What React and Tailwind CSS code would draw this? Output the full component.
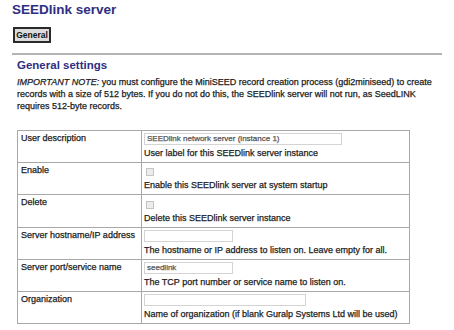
const ROWS = [
  { label: "User description", kind: "text", value: "SEEDlink network server (instance 1)", width: "w-[198px]", help: "User label for this SEEDlink server instance" },
  { label: "Enable", kind: "check", help: "Enable this SEEDlink server at system startup" },
  { label: "Delete", kind: "check", help: "Delete this SEEDlink server instance", extra: true },
  { label: "Server hostname/IP address", kind: "text", value: "", width: "w-[89px]", help: "The hostname or IP address to listen on. Leave empty for all." },
  { label: "Server port/service name", kind: "text", value: "seedlink", width: "w-[89px]", help: "The TCP port number or service name to listen on.", extra: true },
  { label: "Organization", kind: "text", value: "", width: "w-[162px]", help: "Name of organization (if blank Guralp Systems Ltd will be used)" },
];

function Field({ row }) {
  if (row.kind === "check") {
    return (
      <div className={row.extra ? "h-[13px] pt-[4px] pl-[2px]" : "h-[12px] pt-[3px] pl-[2px]"}>
        <span className="block w-[8px] h-[8px] border border-[#c4c4c4] bg-[#ececec]" />
      </div>
    );
  }
  return (
    <div className={`${row.width} h-[12px] border border-[#d4d4d4] bg-white pl-[2px] text-[8px] leading-[10px] text-[#555] whitespace-nowrap overflow-hidden`}>
      {row.value}
    </div>
  );
}

export default function App() {
  return (
    <div className="w-[454px] h-[330px] bg-white overflow-hidden font-['Liberation_Sans',Arial,sans-serif] text-[#1c1c1c]">
      <h1 className="pl-[12px] pt-[2px] text-[13.5px] font-bold leading-[16px] text-[#2e2e82]">SEEDlink server</h1>

      <div className="pl-[13px] mt-[9px]">
        <div className="w-[38px] h-[16px] border-2 border-[#2a2a2a] bg-[#dcdcdc] flex items-center justify-center text-[8.5px] font-bold leading-none text-[#111]">
          General
        </div>
      </div>

      <div className="ml-[12px] mt-[10px] w-[430px] h-[2px] bg-[#b4b4b4]" />

      <div className="pl-[17px] [-webkit-text-stroke:0.25px_currentColor]">
        <h2 className="mt-[3px] text-[11.5px] font-bold leading-[14px] text-[#2e2e82] [-webkit-text-stroke:0px]">General settings</h2>

        <p className="mt-[4px] w-[420px] text-[9px] leading-[12px]">
          <i>IMPORTANT NOTE:</i> you must configure the MiniSEED record creation process (gdi2miniseed) to create
          records with a size of 512 bytes. If you do not do this, the SEEDlink server will not run, as SeedLINK
          requires 512-byte records.
        </p>

        <table className="mt-[18px] w-[393px] border-collapse border border-[#a8a8a8] text-[9px] leading-[12px]">
          <tbody>
            {ROWS.map((row) => (
              <tr key={row.label}>
                <td className="w-[124px] border border-[#a8a8a8] align-top pl-[3px] pt-[1px]">{row.label}</td>
                <td className="border border-[#a8a8a8] align-top pl-[2px] pt-[2px] pb-[3px]">
                  <Field row={row} />
                  <div className="mt-[2px] whitespace-nowrap">{row.help}</div>
                </td>
              </tr>
            ))}
          </tbody>
        </table>
      </div>
    </div>
  );
}
